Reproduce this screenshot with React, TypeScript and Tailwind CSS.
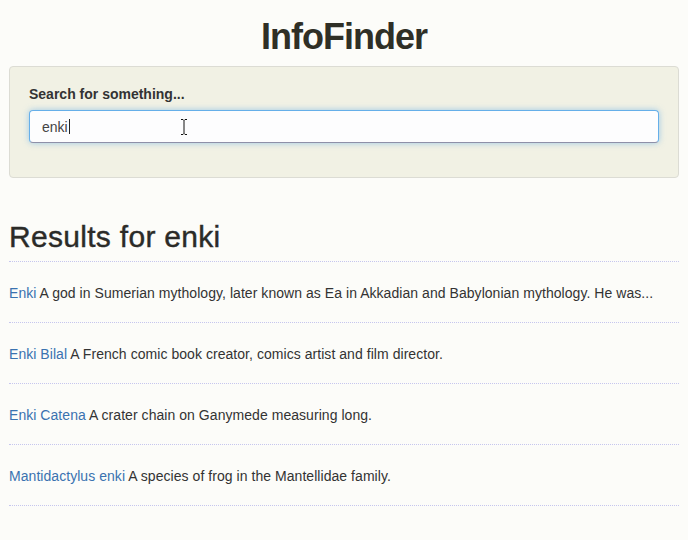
import React from "react"

const results = [
  {
    title: "Enki",
    text: "A god in Sumerian mythology, later known as Ea in Akkadian and Babylonian mythology. He was...",
  },
  { title: "Enki Bilal", text: "A French comic book creator, comics artist and film director." },
  { title: "Enki Catena", text: "A crater chain on Ganymede measuring long." },
  { title: "Mantidactylus enki", text: "A species of frog in the Mantellidae family." },
]

function IBeam() {
  return (
    <svg className="absolute left-[150px] top-[7px]" width="8" height="18" viewBox="0 0 8 18" fill="none">
      <path d="M1 1.5h2l1 1 1-1h2M4 2.5v13M1 16.5h2l1-1 1 1h2" stroke="#fff" strokeWidth="2.4" />
      <path d="M1 1.5h2l1 1 1-1h2M4 2.5v13M1 16.5h2l1-1 1 1h2" stroke="#111" strokeWidth="1" />
    </svg>
  )
}

export default function App() {
  return (
    <div className="min-h-[540px] bg-[#fcfcf9] font-['Liberation_Sans',Arial,sans-serif] text-[14px] leading-5 text-[#333]">
      <div className="px-[9px] pt-[17px]">
        <h1 className="text-center text-[36px] font-bold leading-10 tracking-[-1px] text-[#2f2f26]">InfoFinder</h1>

        {/* search well */}
        <div className="mt-[9px] rounded border border-[#dcdcd4] bg-[#f1f1e4] px-[19px] pb-[34px] pt-[17px]">
          <label className="mb-[6px] block font-bold">Search for something...</label>
          <div className="relative flex h-[33px] items-center rounded border border-[#66afe9] border-b-[#8e90a8] bg-[#fdfdfe] px-3 text-[#444] shadow-[0_0_6px_rgba(102,175,233,0.6)]">
            <span>enki</span>
            <span className="ml-[1px] h-[15px] w-px bg-[#222]" />
            <IBeam />
          </div>
        </div>

        <h2 className="mb-2 mt-[42px] text-[30px] leading-[33px] tracking-[0.3px] text-[#2b2b28] [-webkit-text-stroke:0.4px_#2b2b28]">
          Results for enki
        </h2>

        <ul className="border-t border-dotted border-[#c6c6ee]">
          {results.map((r) => (
            <li key={r.title} className="border-b border-dotted border-[#c6c6ee] pb-[19px] pt-[21px] tracking-[0.05px]">
              <a className="text-[#3a72b0]">{r.title}</a> {r.text}
            </li>
          ))}
        </ul>
      </div>
    </div>
  )
}
